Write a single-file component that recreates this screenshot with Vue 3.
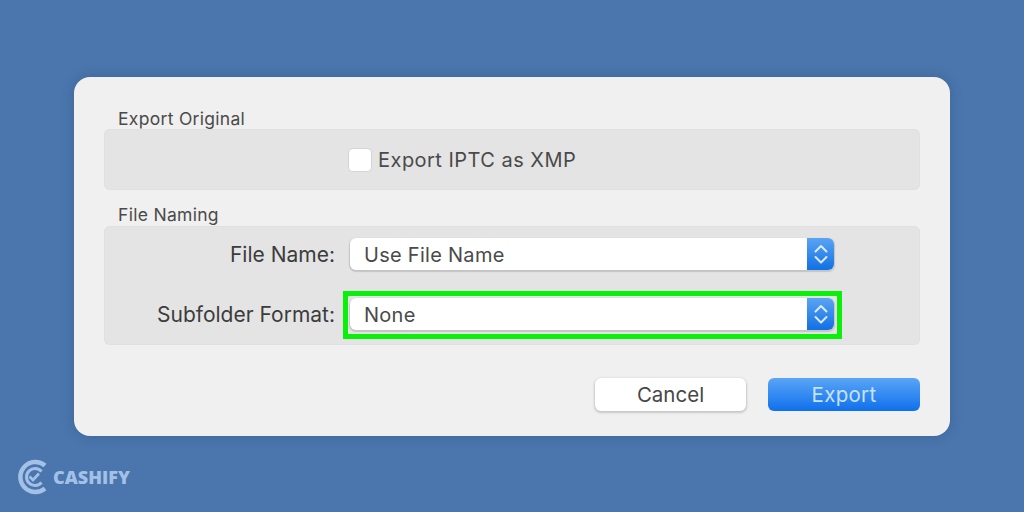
<script setup>
const rows = [
  { label: 'File Name:', value: 'Use File Name', marked: false },
  { label: 'Subfolder Format:', value: 'None', marked: true }
];
</script>

<template>
  <div class="page">
    <div class="dialog">
      <div class="group-title first">Export Original</div>
      <div class="group group-original">
        <span class="checkbox"></span>
        <span class="check-label">Export IPTC as XMP</span>
      </div>

      <div class="group-title second">File Naming</div>
      <div class="group group-naming">
        <div v-for="row in rows" :key="row.label" class="row">
          <span class="row-label">{{ row.label }}</span>
          <div class="select" :class="{ marked: row.marked }">
            <span class="select-value">{{ row.value }}</span>
            <span class="stepper">
              <svg width="14" height="22" viewBox="0 0 14 22" fill="none" stroke="#dcebfb" stroke-width="2" stroke-linecap="round" stroke-linejoin="round">
                <path d="M1.5 8.5 7 3 12.5 8.5" />
                <path d="M1.5 14 7 19.5 12.5 14" />
              </svg>
            </span>
          </div>
        </div>
      </div>

      <div class="actions">
        <button class="btn btn-cancel">Cancel</button>
        <button class="btn btn-export">Export</button>
      </div>
    </div>

    <div class="brand">
      <svg width="34" height="36" viewBox="0 0 34 36" fill="none" stroke="#a3c1e6">
        <path d="M29 6.5A15 15 0 1 0 29 29.5" stroke-width="4.5" />
        <path d="M25.5 12.5A8.5 8.5 0 1 0 25.5 23.5" stroke-width="3" />
        <path d="M13.5 17.5 17 21 23 14.5" stroke-width="2.6" />
      </svg>
      <span class="brand-name">CASHIFY</span>
    </div>
  </div>
</template>

<style scoped>
.page {
  width: 1024px;
  height: 512px;
  box-sizing: border-box;
  padding: 77px 74px 0;
  background: #4a76ad;
  overflow: hidden;
  font-family: Inter, "Liberation Sans", sans-serif;
  color: #4a4a4a;
}
.dialog {
  width: 876px;
  height: 359px;
  box-sizing: border-box;
  padding: 0 30px;
  background: #f0f0f0;
  border-radius: 16px;
  box-shadow: 0 0 12px rgba(40, 70, 110, 0.35);
}
.group-title {
  margin-left: 14px;
  font-size: 17.5px;
  line-height: 20px;
  letter-spacing: 0.3px;
}
.group-title.first {
  padding-top: 32px;
}
.group-title.second {
  margin-top: 15px;
  margin-bottom: 1px;
}
.group {
  background: #e4e4e4;
  border-radius: 6px;
  box-shadow: inset 0 0 0 1px #e0e0e0;
}
.group-original {
  height: 61px;
  display: flex;
  align-items: center;
  padding-left: 245px;
  box-sizing: border-box;
}
.checkbox {
  width: 22px;
  height: 22px;
  background: #fff;
  border-radius: 4px;
  box-shadow: 0 0 0 1px #d4d4d4;
}
.check-label {
  margin-left: 7px;
  font-size: 20px;
  letter-spacing: 0.47px;
}
.group-naming {
  height: 119px;
  box-sizing: border-box;
  padding-top: 12px;
  display: flex;
  flex-direction: column;
  gap: 28px;
}
.row {
  display: flex;
  align-items: center;
  height: 32px;
}
.row-label {
  width: 231px;
  text-align: right;
  font-size: 21px;
  color: #3c3c3c;
}
.select {
  position: relative;
  margin-left: 15px;
  width: 484px;
  height: 32px;
  display: flex;
  justify-content: space-between;
  background: #fff;
  border-radius: 6px;
  box-shadow: 0 1px 1px 1px #c4c4c4;
}
.select.marked::after {
  content: "";
  position: absolute;
  inset: -7px -8px -9px -7px;
  border: 5px solid #0bf00b;
  pointer-events: none;
}
.select-value {
  margin-left: 14px;
  font-size: 20px;
  line-height: 34px;
  letter-spacing: 0.28px;
}
.stepper {
  width: 27px;
  display: flex;
  align-items: center;
  justify-content: center;
  border-radius: 0 6px 6px 0;
  background: linear-gradient(#5ba4f3, #1170e4);
}
.actions {
  display: flex;
  justify-content: flex-end;
  gap: 22px;
  margin-top: 33px;
}
.btn {
  width: 152px;
  height: 33px;
  padding: 0;
  border: 0;
  border-radius: 6px;
  font-family: inherit;
  font-size: 20.5px;
}
.btn-cancel {
  background: #fff;
  color: #474747;
  box-shadow: 0 1px 2px 1px #c8c8c8;
  width: 151px;
}
.btn-export {
  background: linear-gradient(#5aa5f6, #0f70ec);
  color: #c6e2fd;
  letter-spacing: 0.3px;
}
.brand {
  display: flex;
  align-items: center;
  margin: 23px 0 0 -58px;
}
.brand-name {
  margin-left: 3px;
  font-family: "Open Sans", "Liberation Sans", sans-serif;
  font-size: 18px;
  font-weight: 800;
  color: #a3c1e6;
}
</style>
